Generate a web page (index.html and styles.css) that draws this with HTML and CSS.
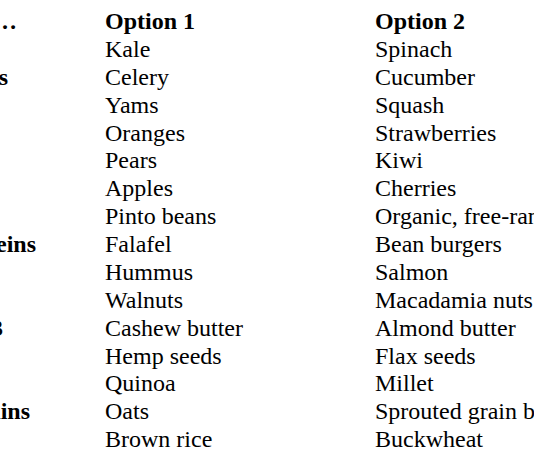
FILE: index.html
```html
<!DOCTYPE html>
<html lang="en">
<head>
<meta charset="utf-8">
<title>Food swaps</title>
<link rel="stylesheet" href="styles.css">
</head>
<body>
<div class="table">
  <div class="cat"><span class="head-cat">Instead of…</span></div>
  <div class="head">Option 1</div>
  <div class="head">Option 2</div>

  <div class="cat"></div><div>Kale</div><div>Spinach</div>
  <div class="cat"><span class="veg">Vegetables</span></div><div>Celery</div><div>Cucumber</div>
  <div class="cat"></div><div>Yams</div><div>Squash</div>
  <div class="cat"></div><div>Oranges</div><div>Strawberries</div>
  <div class="cat"></div><div>Pears</div><div>Kiwi</div>
  <div class="cat"></div><div>Apples</div><div>Cherries</div>
  <div class="cat"></div><div>Pinto beans</div><div>Organic, free-range eggs</div>
  <div class="cat"><span class="prot">Proteins</span></div><div>Falafel</div><div>Bean burgers</div>
  <div class="cat"></div><div>Hummus</div><div>Salmon</div>
  <div class="cat"></div><div>Walnuts</div><div>Macadamia nuts</div>
  <div class="cat"><span class="omega">Omega-3</span></div><div>Cashew butter</div><div>Almond butter</div>
  <div class="cat"></div><div>Hemp seeds</div><div>Flax seeds</div>
  <div class="cat"></div><div>Quinoa</div><div>Millet</div>
  <div class="cat"><span class="grain">Grains</span></div><div>Oats</div><div>Sprouted grain bread</div>
  <div class="cat"></div><div>Brown rice</div><div>Buckwheat</div>
</div>
</body>
</html>
```
FILE: styles.css
```css
html, body {
  margin: 0;
  padding: 0;
  background: #fff;
  overflow: hidden;
}
body {
  padding-top: 8px;
  font-family: "Liberation Serif", "Times New Roman", serif;
  font-size: 24px;
  line-height: 27.87px;
  color: #000;
}
.table {
  display: grid;
  grid-template-columns: 105px 270px 400px;
  width: 775px;
}
.table > div {
  white-space: nowrap;
}
.cat {
  display: flex;
  justify-content: flex-end;
  font-weight: bold;
}
.head {
  font-weight: bold;
}
.head-cat { padding-right: 88px; }
.veg { padding-right: 97px; }
.prot { padding-right: 69px; }
.omega { padding-right: 102px; }
.grain { padding-right: 75px; }
```
